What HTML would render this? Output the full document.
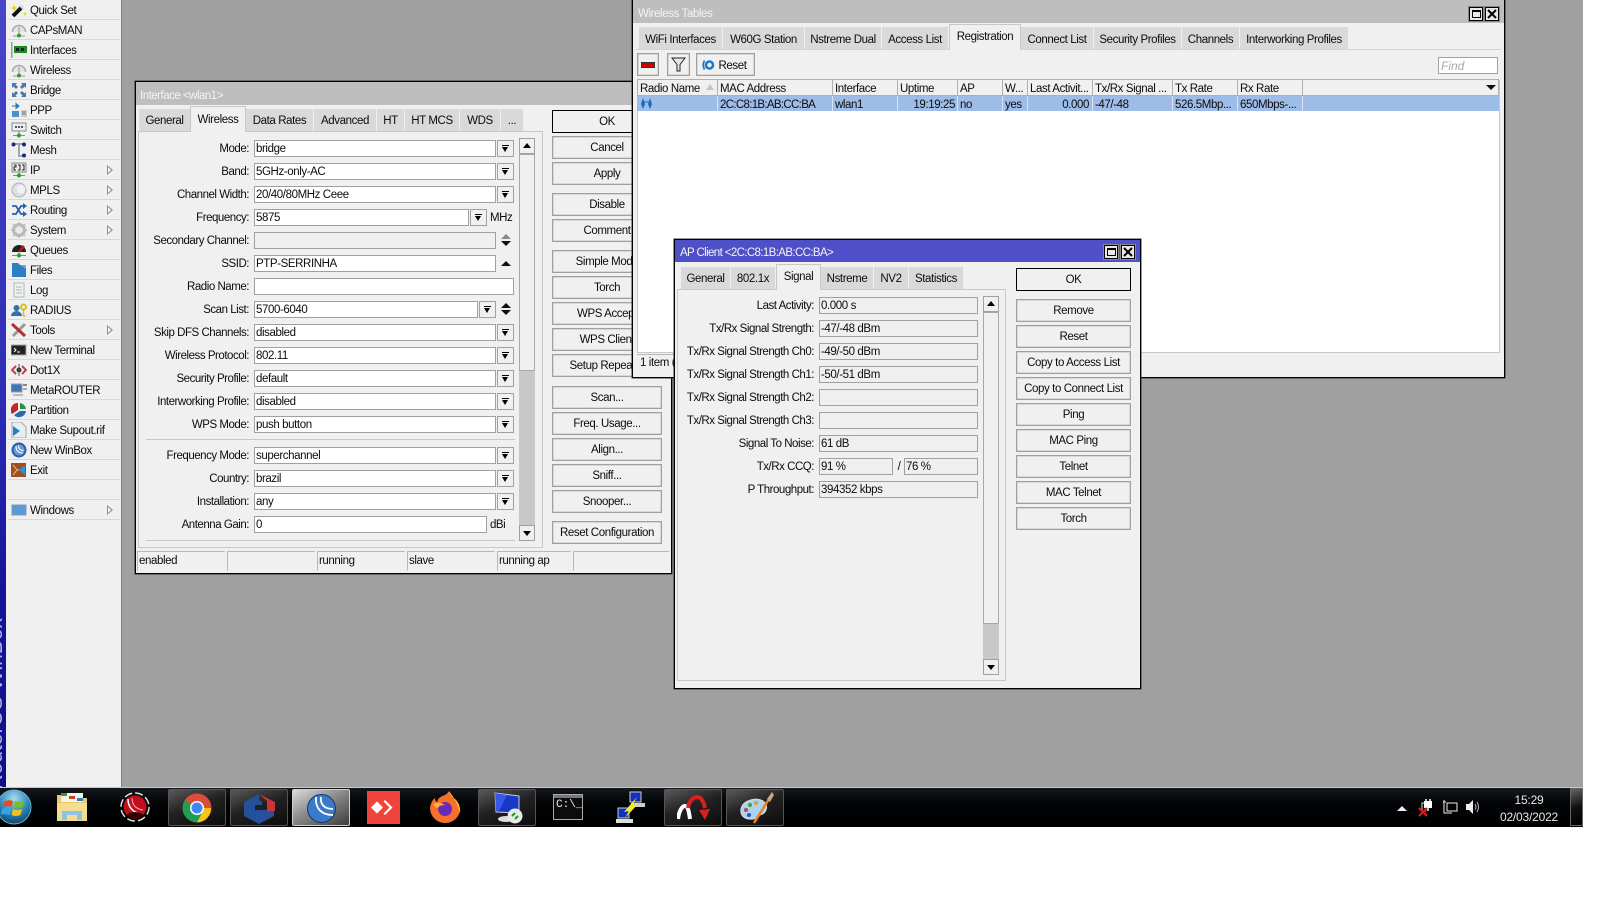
<!DOCTYPE html>
<html><head><meta charset="utf-8"><title>WinBox</title>
<style>
html,body{margin:0;padding:0;background:#fff;width:1600px;height:900px;overflow:hidden}
*{box-sizing:border-box}
#root{position:absolute;left:0;top:0;width:1600px;height:900px;overflow:hidden;font:11.5px/16px "Liberation Sans",sans-serif;letter-spacing:-.4px;color:#0c0c0c}
#root div,#root svg{position:absolute}
.desk{left:0;top:0;width:1583px;height:787px;background:#a0a0a0}
.strip{left:0;top:0;width:6px;height:787px;background:linear-gradient(#4a46c8,#2f2db4 50%,#14149a 75%,#0e0e8c);overflow:hidden}
.strip div{writing-mode:vertical-rl;transform:rotate(180deg);left:-15px;bottom:-3px;font-size:21px;line-height:21px;letter-spacing:0;color:#b4b4d8;white-space:nowrap}
.menu{left:6px;top:0;width:116px;height:787px;background:#f0f0f0;border-right:1px solid #808080}
.m{left:2px;width:112px;height:20px;border-bottom:1px solid #d8d8d8;line-height:22px;padding-left:22px;white-space:nowrap}
.m svg{left:3px;top:2px;width:16px;height:16px}
.m i{position:absolute;left:99px;top:5px;width:6px;height:10px;background:#909090;clip-path:polygon(0 0,100% 50%,0 100%)}
.m i::after{content:"";position:absolute;left:1px;top:2px;width:3px;height:6px;background:#fafafa;clip-path:polygon(0 0,100% 50%,0 100%)}
.win{background:#f0f0f0;border:1px solid #000;box-shadow:0 0 0 .5px #333}
.tb{left:0;top:0;right:0;background:#bebebe;color:#f4f4f4;padding-left:4px}
.tab{background:#d9d9d9;height:22px;text-align:center;line-height:25px;white-space:nowrap;border-right:1px solid #f0f0f0}
.tab.a{background:#f0f0f0;height:26px;line-height:25px;border:1px solid #c8c8c8;border-bottom:0;z-index:2}
.panel{background:#f0f0f0;border:1px solid #c8c8c8}
.b{background:#f0f0f0;border:1px solid #a0a0a0;box-shadow:inset 0 0 0 .5px #c0c0c0;text-align:center;line-height:23px;white-space:nowrap;height:23px}
.b.k{border:1px solid #000;box-shadow:none}
.f{height:17px;background:#fff;border:1px solid #a0a0a0;padding-left:1px;line-height:17px;white-space:nowrap;overflow:hidden}
.f.g{background:#efefef}
.l{text-align:right;white-space:nowrap;line-height:19px;height:17px;letter-spacing:-.47px}
.d{width:17px;height:17px;background:#f0f0f0;border:1px solid #a0a0a0}
.d::before{content:"";position:absolute;left:4px;top:4px;width:7px;height:1px;background:#000}
.d::after{content:"";position:absolute;left:4px;top:6px;border-top:5px solid #000;border-left:3.5px solid transparent;border-right:3.5px solid transparent}
.su,.sd{width:16px;height:16px;background:#f0f0f0;border:1px solid #a0a0a0}
.su::after{content:"";position:absolute;left:3px;top:4px;border-bottom:5px solid #000;border-left:4px solid transparent;border-right:4px solid transparent}
.sd::after{content:"";position:absolute;left:3px;top:5px;border-top:5px solid #000;border-left:4px solid transparent;border-right:4px solid transparent}
.ua{width:0;height:0;border-bottom:5px solid #111;border-left:5px solid transparent;border-right:5px solid transparent}
.da{width:0;height:0;border-top:5px solid #111;border-left:5px solid transparent;border-right:5px solid transparent}
.sb{height:20px;background:#f0f0f0;border:1px solid #b8b8b8;border-right-color:#f0f0f0;border-bottom-color:#f0f0f0;padding-left:1px;line-height:18px}
.th{top:79px;height:17px;background:#f0f0f0;border:1px solid #b0b0b0;border-left:0;padding-left:2px;line-height:18px;white-space:nowrap;overflow:hidden}
.td{top:96px;height:15px;line-height:19px;padding-left:2px;white-space:nowrap;overflow:hidden;border-right:1px solid #d8e4f4}
.wb{width:14px;height:14px;border:1px solid #000;background:#e8e8e8;box-shadow:0 0 0 1px #888}
.task{left:0;top:787px;width:1583px;height:40px;background:linear-gradient(#14181c,#020406 40%,#000);border-top:1px solid #c8c8c8}
.tbtn{top:1px;width:58px;height:37px;border:1px solid #555;border-radius:2px;background:linear-gradient(160deg,#5a5a5a,#222 45%,#0c0c0c)}
.tbtn.on{background:linear-gradient(150deg,#dcdcdc,#8c8c8c 45%,#3c3c3c);border-color:#d0d0d0}
.clock{color:#e8e8e8;text-align:center;font-size:12px;letter-spacing:-.2px;width:90px}
</style></head><body>
<div id="root">
<div class="desk"></div>
<div class="strip"><div>RouterOS WinBox</div></div>
<div class="menu">
<div class="m" style="top:0"><svg viewBox="0 0 16 16"><path d="M2 14L11 5" stroke="#111" stroke-width="4"/><path d="M10 6L12 4" stroke="#ddd" stroke-width="4"/><path d="M3 3l1 2 2 1-2 1-1 2-1-2-2-1 2-1zM14 10l.7 1.3 1.3.7-1.3.7-.7 1.3-.7-1.3-1.3-.7 1.3-.7z" fill="#e6d800"/></svg>Quick Set</div>
<div class="m" style="top:20px"><svg viewBox="0 0 16 16"><path d="M1.5 10a6.5 6.5 0 0 1 13 0" fill="#e4e4e4" stroke="#a8a8a8" stroke-width="1.5"/><path d="M8 5v9" stroke="#999"/><path d="M2 14h12" stroke="#999"/><circle cx="8" cy="13.5" r="2" fill="#2aa02a"/></svg>CAPsMAN</div>
<div class="m" style="top:40px"><svg viewBox="0 0 16 16"><rect x="0" y="0" width="1.5" height="16" fill="#999"/><rect x="3" y="4" width="13" height="7" fill="#1a8a20"/><rect x="5" y="6" width="3" height="3" fill="#123"/><rect x="10" y="6" width="3" height="3" fill="#123"/></svg>Interfaces</div>
<div class="m" style="top:60px"><svg viewBox="0 0 16 16"><path d="M1.5 10a6.5 6.5 0 0 1 13 0" fill="#e4e4e4" stroke="#a8a8a8" stroke-width="1.5"/><path d="M8 5v9" stroke="#999"/><path d="M2 14h12" stroke="#999"/><circle cx="8" cy="13.5" r="2" fill="#2aa02a"/></svg>Wireless</div>
<div class="m" style="top:80px"><svg viewBox="0 0 16 16"><g fill="#4a78a8"><path d="M1 1h5L4.500 2.500 7 5 5 7 2.500 4.500 1 6zM15 1v5l-1.500-1.500L11 7 9 5l2.500-2.500L10 1zM1 15v-5l1.500 1.500L5 9l2 2-2.500 2.500L6 15zM15 15h-5l1.500-1.500L9 11l2-2 2.500 2.500L15 10z"/></g></svg>Bridge</div>
<div class="m" style="top:100px"><svg viewBox="0 0 16 16"><path d="M1 4h6M5 1.500L8 4 5 6.500z" stroke="#2a7ab8" fill="#2a7ab8"/><rect x="1" y="9" width="7" height="6" fill="#4a90d0"/><rect x="10" y="8" width="6" height="7" fill="#ccc"/><path d="M11 10h4M11 12h4" stroke="#777"/></svg>PPP</div>
<div class="m" style="top:120px"><svg viewBox="0 0 16 16"><rect x="1" y="1" width="14" height="8" fill="#eee" stroke="#888"/><path d="M4 5h2M7 5h2M10 5h2" stroke="#222" stroke-width="1.500"/><path d="M8 9v5M2 13.500h12" stroke="#888"/><circle cx="8" cy="13.500" r="2" fill="#2aa02a"/></svg>Switch</div>
<div class="m" style="top:140px"><svg viewBox="0 0 16 16"><path d="M2 2h12M8 2v12h5" stroke="#9aa8b0" stroke-width="2" fill="none"/><circle cx="2.500" cy="2.500" r="2" fill="#1a2a80"/><circle cx="13" cy="2.500" r="2" fill="#1a2a80"/><circle cx="13" cy="13.500" r="2" fill="#1a2a80"/></svg>Mesh</div>
<div class="m" style="top:160px"><svg viewBox="0 0 16 16"><rect x="1" y="1" width="14" height="9" fill="#eee" stroke="#888"/><path d="M3 3h2v2H3v3h2M7 3h2v5H7M11 3h2v5h-2" stroke="#222" fill="none"/><path d="M2 13.500h12M8 10v4" stroke="#888"/><circle cx="8" cy="13.500" r="2" fill="#2aa02a"/></svg>IP<i></i></div>
<div class="m" style="top:180px"><svg viewBox="0 0 16 16"><circle cx="8" cy="8" r="7" fill="#dde0e0" stroke="#a8b0b0"/><circle cx="10" cy="7" r="4.500" fill="#f0f2f2"/></svg>MPLS<i></i></div>
<div class="m" style="top:200px"><svg viewBox="0 0 16 16"><path d="M1 4h4l5 8h4M1 12h4l5-8h4" stroke="#2a62a8" stroke-width="1.800" fill="none"/><path d="M12 1l4 3-4 3zM12 9l4 3-4 3z" fill="#2a62a8"/></svg>Routing<i></i></div>
<div class="m" style="top:220px"><svg viewBox="0 0 16 16"><circle cx="8" cy="8" r="5.500" fill="none" stroke="#b8bcb8" stroke-width="3"/><path d="M8 0v16M0 8h16M2 2l12 12M14 2L2 14" stroke="#b8bcb8" stroke-width="1.500"/><circle cx="8" cy="8" r="3.500" fill="#e8ece8"/></svg>System<i></i></div>
<div class="m" style="top:240px"><svg viewBox="0 0 16 16"><path d="M1 10a7 7 0 0 1 14 0z" fill="#222"/><path d="M7 10L12 3l2 2-5 5z" fill="#c81818"/><path d="M1 13.500h14M8 10v4" stroke="#888"/><circle cx="8" cy="13.500" r="2" fill="#2aa02a"/></svg>Queues</div>
<div class="m" style="top:260px"><svg viewBox="0 0 16 16"><path d="M1 1h6l2 2h6v12H1z" fill="#2f7fc0"/><path d="M9 3h6v4z" fill="#5fb0e8"/></svg>Files</div>
<div class="m" style="top:280px"><svg viewBox="0 0 16 16"><rect x="3" y="1" width="10" height="14" fill="#eef2ee" stroke="#b0b8b0"/><path d="M5 5h6M5 8h6M5 11h6" stroke="#b0b8b0"/></svg>Log</div>
<div class="m" style="top:300px"><svg viewBox="0 0 16 16"><circle cx="5.500" cy="6" r="3" fill="#3070b0"/><path d="M0 14a5.500 5 0 0 1 11 0z" fill="#3070b0"/><circle cx="12.500" cy="5" r="2.500" fill="none" stroke="#d8c020" stroke-width="2"/><path d="M12.500 7v7h2" stroke="#d8c020" stroke-width="1.500" fill="none"/></svg>RADIUS</div>
<div class="m" style="top:320px"><svg viewBox="0 0 16 16"><path d="M2 14L14 2" stroke="#999" stroke-width="3"/><path d="M1 2l13 12" stroke="#b03030" stroke-width="3"/></svg>Tools<i></i></div>
<div class="m" style="top:340px"><svg viewBox="0 0 16 16"><rect x="0" y="3" width="15" height="10" fill="#222" stroke="#aaa"/><path d="M3 6l2 2-2 2M6 10h3" stroke="#fff" fill="none"/></svg>New Terminal</div>
<div class="m" style="top:360px"><svg viewBox="0 0 16 16"><path d="M5 4L1 8l4 4M11 4l4 4-4 4" stroke="#c04050" stroke-width="2" fill="none"/><circle cx="8" cy="8" r="2.500" fill="#333"/><path d="M8 2v12" stroke="#555"/></svg>Dot1X</div>
<div class="m" style="top:380px"><svg viewBox="0 0 16 16"><rect x="0" y="2" width="11" height="8" fill="#3a78b8" stroke="#99a"/><rect x="12" y="2" width="4" height="2" fill="#888"/><rect x="12" y="6" width="4" height="2" fill="#aaa"/><path d="M2 13h10" stroke="#bbb" stroke-width="2"/></svg>MetaROUTER</div>
<div class="m" style="top:400px"><svg viewBox="0 0 16 16"><path d="M7 1v7L1 12A7 7 0 0 1 7 1z" fill="#c02828"/><path d="M9 1a7 7 0 0 1 6 6H9z" fill="#2a9040"/><path d="M3 13l6-4h6a7 7 0 0 1-12 4z" fill="#2a6ab0"/></svg>Partition</div>
<div class="m" style="top:420px"><svg viewBox="0 0 16 16"><path d="M1 0h9l5 5v11H1z" fill="#e8eef0" stroke="#a0a8b0"/><path d="M2 4l7 5-7 5z" fill="#2080c8"/></svg>Make Supout.rif</div>
<div class="m" style="top:440px"><svg viewBox="0 0 16 16"><circle cx="8" cy="8" r="7.500" fill="#2a5ca8"/><circle cx="8" cy="8" r="5.500" fill="#6a9ad8"/><path d="M5 4c0 4 2 7 7 7M7.500 3.500c0 3 1.500 5 5 5" stroke="#fff" fill="none"/></svg>New WinBox</div>
<div class="m" style="top:460px"><svg viewBox="0 0 16 16"><rect x="0" y="1" width="15" height="14" fill="#9c4f20"/><path d="M2 3l4 5-4 5M6 8h8" stroke="#e0c090" fill="none"/><path d="M8 8l6-5v10z" fill="#3090d8"/></svg>Exit</div>
<div class="m" style="top:480px"></div>
<div class="m" style="top:500px"><svg viewBox="0 0 16 16"><rect x="1" y="3" width="14" height="10" fill="#5a9ad8" stroke="#8a9aa8"/></svg>Windows<i></i></div>
</div>

<!-- Interface window -->
<div class="win" style="left:135px;top:81px;width:537px;height:493px">
<div class="tb" style="height:23px;line-height:28px;left:0;top:0;letter-spacing:-.5px">Interface &lt;wlan1&gt;</div>
<div style="left:0;top:0;width:535px;height:491px">
<div class="tab" style="left:3px;top:27px;width:52px">General</div>
<div class="tab a" style="left:54px;top:24px;width:56px;line-height:27px">Wireless</div>
<div class="tab" style="left:110px;top:27px;width:68px">Data Rates</div>
<div class="tab" style="left:178px;top:27px;width:63px">Advanced</div>
<div class="tab" style="left:241px;top:27px;width:28px">HT</div>
<div class="tab" style="left:269px;top:27px;width:55px">HT MCS</div>
<div class="tab" style="left:324px;top:27px;width:41px">WDS</div>
<div class="tab" style="left:365px;top:27px;width:23px">...</div>
<div class="panel" style="left:2px;top:49px;width:405px;height:417px"></div>
<div class="l" style="left:0;top:58px;width:113px">Mode:</div><div class="f" style="left:118px;top:58px;width:242px">bridge</div><div class="d" style="left:361px;top:58px"></div>
<div class="l" style="left:0;top:81px;width:113px">Band:</div><div class="f" style="left:118px;top:81px;width:242px">5GHz-only-AC</div><div class="d" style="left:361px;top:81px"></div>
<div class="l" style="left:0;top:104px;width:113px">Channel Width:</div><div class="f" style="left:118px;top:104px;width:242px">20/40/80MHz Ceee</div><div class="d" style="left:361px;top:104px"></div>
<div class="l" style="left:0;top:127px;width:113px">Frequency:</div><div class="f" style="left:118px;top:127px;width:215px">5875</div><div class="d" style="left:334px;top:127px"></div><div class="l" style="left:354px;top:127px;width:24px;text-align:left">MHz</div>
<div class="l" style="left:0;top:150px;width:113px">Secondary Channel:</div><div class="f g" style="left:118px;top:150px;width:242px"></div><div class="ua" style="left:365px;top:152px;border-bottom-color:#8a8a8a"></div><div class="da" style="left:365px;top:159px"></div>
<div class="l" style="left:0;top:173px;width:113px">SSID:</div><div class="f" style="left:118px;top:173px;width:242px">PTP-SERRINHA</div><div class="ua" style="left:365px;top:179px"></div>
<div class="l" style="left:0;top:196px;width:113px">Radio Name:</div><div class="f" style="left:118px;top:196px;width:260px"></div>
<div class="l" style="left:0;top:219px;width:113px">Scan List:</div><div class="f" style="left:118px;top:219px;width:224px">5700-6040</div><div class="d" style="left:343px;top:219px"></div><div class="ua" style="left:365px;top:221px"></div><div class="da" style="left:365px;top:228px"></div>
<div class="l" style="left:0;top:242px;width:113px">Skip DFS Channels:</div><div class="f" style="left:118px;top:242px;width:242px">disabled</div><div class="d" style="left:361px;top:242px"></div>
<div class="l" style="left:0;top:265px;width:113px">Wireless Protocol:</div><div class="f" style="left:118px;top:265px;width:242px">802.11</div><div class="d" style="left:361px;top:265px"></div>
<div class="l" style="left:0;top:288px;width:113px">Security Profile:</div><div class="f" style="left:118px;top:288px;width:242px">default</div><div class="d" style="left:361px;top:288px"></div>
<div class="l" style="left:0;top:311px;width:113px">Interworking Profile:</div><div class="f" style="left:118px;top:311px;width:242px">disabled</div><div class="d" style="left:361px;top:311px"></div>
<div class="l" style="left:0;top:334px;width:113px">WPS Mode:</div><div class="f" style="left:118px;top:334px;width:242px">push button</div><div class="d" style="left:361px;top:334px"></div>
<div style="left:10px;top:357px;width:369px;height:1px;background:#c8c8c8"></div>
<div class="l" style="left:0;top:365px;width:113px">Frequency Mode:</div><div class="f" style="left:118px;top:365px;width:242px">superchannel</div><div class="d" style="left:361px;top:365px"></div>
<div class="l" style="left:0;top:388px;width:113px">Country:</div><div class="f" style="left:118px;top:388px;width:242px">brazil</div><div class="d" style="left:361px;top:388px"></div>
<div class="l" style="left:0;top:411px;width:113px">Installation:</div><div class="f" style="left:118px;top:411px;width:242px">any</div><div class="d" style="left:361px;top:411px"></div>
<div class="l" style="left:0;top:434px;width:113px">Antenna Gain:</div><div class="f" style="left:118px;top:434px;width:233px">0</div><div class="l" style="left:354px;top:434px;width:24px;text-align:left">dBi</div>
<div style="left:10px;top:458px;width:369px;height:1px;background:#c8c8c8"></div>
<div style="left:383px;top:56px;width:16px;height:388px;background:#c8c8c8"></div>
<div style="left:383px;top:72px;width:16px;height:217px;background:#f0f0f0;border:1px solid #a8a8a8"></div>
<div class="su" style="left:383px;top:56px"></div>
<div class="sd" style="left:383px;top:443px"></div>
<div class="b k" style="left:416px;top:28px;width:110px">OK</div>
<div class="b" style="left:416px;top:54px;width:110px">Cancel</div>
<div class="b" style="left:416px;top:80px;width:110px">Apply</div>
<div class="b" style="left:416px;top:111px;width:110px">Disable</div>
<div class="b" style="left:416px;top:137px;width:110px">Comment</div>
<div class="b" style="left:416px;top:168px;width:110px">Simple Mode</div>
<div class="b" style="left:416px;top:194px;width:110px">Torch</div>
<div class="b" style="left:416px;top:220px;width:110px">WPS Accept</div>
<div class="b" style="left:416px;top:246px;width:110px">WPS Client</div>
<div class="b" style="left:416px;top:272px;width:110px">Setup Repeater</div>
<div class="b" style="left:416px;top:304px;width:110px">Scan...</div>
<div class="b" style="left:416px;top:330px;width:110px">Freq. Usage...</div>
<div class="b" style="left:416px;top:356px;width:110px">Align...</div>
<div class="b" style="left:416px;top:382px;width:110px">Sniff...</div>
<div class="b" style="left:416px;top:408px;width:110px">Snooper...</div>
<div class="b" style="left:416px;top:439px;width:110px">Reset Configuration</div>
<div class="sb" style="left:1px;top:469px;width:88px">enabled</div>
<div class="sb" style="left:91px;top:469px;width:88px"></div>
<div class="sb" style="left:181px;top:469px;width:88px">running</div>
<div class="sb" style="left:271px;top:469px;width:88px">slave</div>
<div class="sb" style="left:361px;top:469px;width:74px">running ap</div>
<div class="sb" style="left:437px;top:469px;width:97px"></div>
</div></div>

<!-- Wireless Tables window -->
<div class="win" style="left:632px;top:-1px;width:873px;height:379px;background:#f0f0f0">
<div class="tb" style="height:23px;line-height:28px;padding-left:5px">Wireless Tables</div>
<div class="wb" style="left:836px;top:7px"></div><div style="left:839px;top:10px;width:9px;height:8px;border:1px solid #000;border-top-width:2px"></div>
<div class="wb" style="left:852px;top:7px"></div><svg style="left:854px;top:9px" width="10" height="10" viewBox="0 0 10 10"><path d="M1 1l8 8M9 1l-8 8" stroke="#000" stroke-width="2"/></svg>
<div class="tab" style="left:6px;top:27px;width:84px;line-height:26px">WiFi Interfaces</div>
<div class="tab" style="left:90px;top:27px;width:82px;line-height:26px">W60G Station</div>
<div class="tab" style="left:172px;top:27px;width:77px;line-height:26px">Nstreme Dual</div>
<div class="tab" style="left:249px;top:27px;width:67px;line-height:26px">Access List</div>
<div class="tab a" style="left:316px;top:24px;width:72px;height:26px">Registration</div>
<div class="tab" style="left:388px;top:27px;width:73px;line-height:26px">Connect List</div>
<div class="tab" style="left:461px;top:27px;width:88px;line-height:26px">Security Profiles</div>
<div class="tab" style="left:549px;top:27px;width:58px;line-height:26px">Channels</div>
<div class="tab" style="left:607px;top:27px;width:109px;line-height:26px">Interworking Profiles</div>
<div style="left:3px;top:49px;width:865px;height:1px;background:#d4d4d4"></div>
<div class="b" style="left:4px;top:53px;width:22px;height:23px"><div style="left:4px;top:9px;width:12px;height:4px;background:#d00000;outline:1px solid #333"></div></div>
<div class="b" style="left:34px;top:53px;width:23px;height:23px"><svg style="left:3px;top:3px" width="15" height="15" viewBox="0 0 15 15"><path d="M1 1h13L9 7.500V14H6V7.500z" fill="#e8e8e8" stroke="#222"/></svg></div>
<div class="b" style="left:63px;top:53px;width:59px;height:23px;padding-left:14px;line-height:25px"><svg style="left:4px;top:4px" width="14" height="14" viewBox="0 0 14 14"><circle cx="8.500" cy="7" r="3.500" fill="none" stroke="#1a78c8" stroke-width="2.500"/><path d="M3.500 2.500Q1 7 3.500 11.500" stroke="#1a78c8" stroke-width="1.800" fill="none"/></svg>Reset</div>
<div class="f" style="left:805px;top:57px;width:60px;color:#a8a8a8;font-style:italic;font-size:12px;letter-spacing:0;padding-left:2px">Find</div>
<div style="left:4px;top:80px;width:863px;height:273px;background:#fff;border:1px solid #c8c8c8"></div>
</div>
<div style="left:0;top:0;width:0;height:0">
<div class="th" style="left:637px;width:81px;border-left:1px solid #b0b0b0">Radio Name</div>
<div class="th" style="left:718px;width:115px">MAC Address</div>
<div class="th" style="left:833px;width:65px">Interface</div>
<div class="th" style="left:898px;width:60px">Uptime</div>
<div class="th" style="left:958px;width:45px">AP</div>
<div class="th" style="left:1003px;width:25px">W...</div>
<div class="th" style="left:1028px;width:65px">Last Activit...</div>
<div class="th" style="left:1093px;width:80px">Tx/Rx Signal ...</div>
<div class="th" style="left:1173px;width:65px">Tx Rate</div>
<div class="th" style="left:1238px;width:65px">Rx Rate</div>
<div class="th" style="left:1303px;width:196px"></div>
<div class="da" style="left:1486px;top:85px;z-index:1"></div>
<div style="left:706px;top:84px;width:0;height:0;border-bottom:6px solid #c4c4c4;border-left:4px solid transparent;border-right:4px solid transparent"></div>
<div style="left:637px;top:96px;width:862px;height:15px;background:#9dbde8"></div>
<div class="td" style="left:637px;width:81px"><svg style="left:3px;top:1px" width="13" height="13" viewBox="0 0 13 13"><path d="M3 1L1 7l2 5 2-5zM10 1L8 7l2 5 2-5z" fill="#1a6ac0"/><path d="M3 5h7" stroke="#1a6ac0"/></svg></div>
<div class="td" style="left:718px;width:115px;letter-spacing:-.68px">2C:C8:1B:AB:CC:BA</div>
<div class="td" style="left:833px;width:65px">wlan1</div>
<div class="td" style="left:898px;width:60px;text-align:right;padding-right:2px">19:19:25</div>
<div class="td" style="left:958px;width:45px">no</div>
<div class="td" style="left:1003px;width:25px">yes</div>
<div class="td" style="left:1028px;width:65px;text-align:right;padding-right:3px">0.000</div>
<div class="td" style="left:1093px;width:80px">-47/-48</div>
<div class="td" style="left:1173px;width:65px">526.5Mbp...</div>
<div class="td" style="left:1238px;width:65px">650Mbps-...</div>
<div style="left:637px;top:354px;width:60px;height:22px;border-top:1px solid #b8b8b8;border-right:1px solid #b8b8b8;padding-left:3px;line-height:17px;white-space:nowrap">1 item (1</div>
</div>

<!-- AP Client window -->
<div class="win" style="left:674px;top:239px;width:467px;height:450px">
<div class="tb" style="height:22px;line-height:27px;background:#4f50c8;padding-left:5px;letter-spacing:-.62px">AP Client &lt;2C:C8:1B:AB:CC:BA&gt;</div>
<div class="wb" style="left:429px;top:5px"></div><div style="left:432px;top:8px;width:9px;height:8px;border:1px solid #000;border-top-width:2px"></div>
<div class="wb" style="left:446px;top:5px"></div><svg style="left:448px;top:7px" width="10" height="10" viewBox="0 0 10 10"><path d="M1 1l8 8M9 1l-8 8" stroke="#000" stroke-width="2"/></svg>
<div class="tab" style="left:6px;top:27px;width:50px">General</div>
<div class="tab" style="left:56px;top:27px;width:45px">802.1x</div>
<div class="tab a" style="left:101px;top:24px;width:45px">Signal</div>
<div class="tab" style="left:146px;top:27px;width:53px">Nstreme</div>
<div class="tab" style="left:199px;top:27px;width:35px">NV2</div>
<div class="tab" style="left:234px;top:27px;width:55px">Statistics</div>
<div class="panel" style="left:2px;top:49px;width:329px;height:392px"></div>
<div class="l" style="left:0;top:57px;width:139px">Last Activity:</div><div class="f g" style="left:144px;top:57px;width:159px">0.000 s</div>
<div class="l" style="left:0;top:80px;width:139px">Tx/Rx Signal Strength:</div><div class="f g" style="left:144px;top:80px;width:159px">-47/-48 dBm</div>
<div class="l" style="left:0;top:103px;width:139px">Tx/Rx Signal Strength Ch0:</div><div class="f g" style="left:144px;top:103px;width:159px">-49/-50 dBm</div>
<div class="l" style="left:0;top:126px;width:139px">Tx/Rx Signal Strength Ch1:</div><div class="f g" style="left:144px;top:126px;width:159px">-50/-51 dBm</div>
<div class="l" style="left:0;top:149px;width:139px">Tx/Rx Signal Strength Ch2:</div><div class="f g" style="left:144px;top:149px;width:159px"></div>
<div class="l" style="left:0;top:172px;width:139px">Tx/Rx Signal Strength Ch3:</div><div class="f g" style="left:144px;top:172px;width:159px"></div>
<div class="l" style="left:0;top:195px;width:139px">Signal To Noise:</div><div class="f g" style="left:144px;top:195px;width:159px">61 dB</div>
<div class="l" style="left:0;top:218px;width:139px">Tx/Rx CCQ:</div><div class="f g" style="left:144px;top:218px;width:74px">91 %</div><div class="l" style="left:220px;top:218px;width:8px;text-align:center">/</div><div class="f g" style="left:229px;top:218px;width:74px">76 %</div>
<div class="l" style="left:0;top:241px;width:139px">P Throughput:</div><div class="f g" style="left:144px;top:241px;width:159px">394352 kbps</div>
<div style="left:308px;top:56px;width:16px;height:378px;background:#c8c8c8"></div>
<div style="left:308px;top:72px;width:16px;height:312px;background:#f0f0f0;border:1px solid #a8a8a8"></div>
<div class="su" style="left:308px;top:56px"></div>
<div class="sd" style="left:308px;top:419px"></div>
<div class="b k" style="left:341px;top:28px;width:115px">OK</div>
<div class="b" style="left:341px;top:59px;width:115px">Remove</div>
<div class="b" style="left:341px;top:85px;width:115px">Reset</div>
<div class="b" style="left:341px;top:111px;width:115px">Copy to Access List</div>
<div class="b" style="left:341px;top:137px;width:115px">Copy to Connect List</div>
<div class="b" style="left:341px;top:163px;width:115px">Ping</div>
<div class="b" style="left:341px;top:189px;width:115px">MAC Ping</div>
<div class="b" style="left:341px;top:215px;width:115px">Telnet</div>
<div class="b" style="left:341px;top:241px;width:115px">MAC Telnet</div>
<div class="b" style="left:341px;top:267px;width:115px">Torch</div>
</div>

<!-- Taskbar -->
<div class="task">
<svg style="left:-3px;top:1px" width="36" height="37" viewBox="0 0 36 37"><defs><radialGradient id="o" cx=".5" cy=".25" r=".8"><stop offset="0" stop-color="#a8dcf0"/><stop offset=".55" stop-color="#2a86b8"/><stop offset="1" stop-color="#0c3c60"/></radialGradient></defs><circle cx="17" cy="18" r="17" fill="url(#o)" stroke="#6ab0d0"/><path d="M7 13q4-3 9-1l-1.500 6q-5-2-9 0z" fill="#e84a20"/><path d="M18 12q4 2 9 0l-1.500 6q-5 2-9 0z" fill="#78c020"/><path d="M5 20q4-2 9 0l-1.500 6q-5-2-9 0z" fill="#30a8e8"/><path d="M16 20q4 2 9 0l-1.500 6q-5 2-9 0z" fill="#f0c020"/></svg>
<svg style="left:56px;top:3px" width="33" height="33" viewBox="0 0 33 33"><path d="M1 4h14l3 3h13v23H1z" fill="#e8c868"/><rect x="5" y="2" width="22" height="9" fill="#f4f4e8"/><rect x="5" y="2" width="6" height="3" fill="#2aa040"/><rect x="13" y="5" width="6" height="3" fill="#c84030"/><rect x="21" y="7" width="6" height="3" fill="#3080d0"/><path d="M1 12h30v18H1z" fill="#f4dc90"/><path d="M6 20h20v9h-5v-5H11v5H6z" fill="#8cc4e8"/></svg>
<svg style="left:120px;top:3px" width="30" height="32" viewBox="0 0 30 32"><circle cx="15" cy="16" r="14" fill="none" stroke="#ddd" stroke-width="1.500" stroke-dasharray="8 3"/><circle cx="15" cy="16" r="11.500" fill="#c01020"/><path d="M8 8c0 8 5 14 14 15" stroke="#fff" stroke-width="1.500" fill="none"/><path d="M12 7c0 7 4 11 11 12" stroke="#ffb0b0" fill="none"/><ellipse cx="15" cy="24" rx="8" ry="3" fill="#300"/></svg>
<div class="tbtn" style="left:168px"><svg style="left:13px;top:3px" width="30" height="30" viewBox="0 0 30 30"><circle cx="15" cy="15" r="14.500" fill="#dd4b39"/><path d="M15 15L2.500 22A14.500 14.500 0 0 1 3 7z" fill="#1e9e50"/><path d="M15 15h14a14.500 14.500 0 0 1-14 14.500L8 22z" fill="#f7c518"/><path d="M15 15L2.500 22A14.500 14.500 0 0 0 15 29.500L21 18z" fill="#1e9e50"/><circle cx="15" cy="15" r="7" fill="#fff"/><circle cx="15" cy="15" r="5.500" fill="#4285f4"/></svg></div>
<div class="tbtn" style="left:230px"><svg style="left:12px;top:3px" width="33" height="31" viewBox="0 0 33 31"><path d="M16 1l-15 8v14l15 8 15-8v-6H12v-5h7V9l-3-2z" fill="#25509c"/><path d="M16 1l16 8v9h-8V8z" fill="#c8353a"/><path d="M12 17h12v4H12z" fill="#25509c"/></svg></div>
<div class="tbtn on" style="left:292px"><svg style="left:14px;top:4px" width="29" height="29" viewBox="0 0 29 29"><circle cx="14.500" cy="14.500" r="14" fill="#3a7ac8" stroke="#17366e"/><path d="M9 3c-1 11 5 18 17 18M14 3c-1 7 3 12 12 12" stroke="#fff" stroke-width="1.800" fill="none"/></svg></div>
<svg style="left:367px;top:3px" width="33" height="33" viewBox="0 0 33 33"><rect width="33" height="33" fill="#ef443b"/><path d="M10 10.500l6 6-6 6-6-6z" fill="#fff"/><path d="M18 9l7.500 7.500L18 24l-1.500-1.500 6-6-6-6z" fill="#fff"/></svg>
<svg style="left:429px;top:3px" width="32" height="33" viewBox="0 0 32 33"><path d="M16 32A15 15 0 0 1 1 17Q2 10 6 7q0 3 2 4 1-5 8-7 3-2 4-4 1 4 5 7 6 5 6 13a15 15 0 0 1-15 12z" fill="#f5702a"/><path d="M20 0q1 5 6 8 6 6 5 14-3-12-11-22z" fill="#ffbd30"/><circle cx="16" cy="18" r="7" fill="#6a2ab8"/><path d="M4 13q6-3 12 1-6 0-7 3-3 0-5-4z" fill="#ffb030"/></svg>
<div class="tbtn" style="left:478px"><svg style="left:13px;top:2px" width="34" height="32" viewBox="0 0 34 32"><path d="M3 1l24 3v17L4 20z" fill="#1838c8" stroke="#ccd"/><path d="M3 1l12 2-8 16H4z" fill="#3858e8"/><ellipse cx="14" cy="27" rx="8" ry="3" fill="#ddd"/><circle cx="23" cy="24" r="7.500" fill="#e8e8e8"/><path d="M20 24l3-3M26 24l-3 3" stroke="#1a9a30" stroke-width="2"/></svg></div>
<svg style="left:553px;top:6px" width="30" height="26" viewBox="0 0 30 26"><rect x=".5" y=".5" width="29" height="25" fill="#0c0c0c" stroke="#aaa"/><rect x="1" y="1" width="28" height="3" fill="#777"/></svg>
<div style="left:556px;top:12px;color:#eee;font:11px/11px 'Liberation Mono',monospace;letter-spacing:0">C:\_</div>
<svg style="left:615px;top:3px" width="32" height="33" viewBox="0 0 32 33"><rect x="15" y="1" width="11" height="10" fill="#1030c0" stroke="#ccc"/><rect x="16" y="12" width="14" height="4" fill="#ccc"/><rect x="3" y="17" width="11" height="10" fill="#1030c0" stroke="#ccc"/><rect x="1" y="28" width="17" height="4" fill="#ddd"/><path d="M22 6L9 21l5-1-4 7 13-14-6 2z" fill="#f4f020"/></svg>
<div class="tbtn" style="left:664px"><svg style="left:12px;top:5px" width="34" height="26" viewBox="0 0 34 26"><path d="M1 24c1-8 4-13 7-13s4 6 5 13" stroke="#fff" stroke-width="4" fill="none"/><path d="M11 13c1-7 5-11 9-11 5 0 7 6 8 11" stroke="#d82020" stroke-width="4" fill="none"/><path d="M22 15l11-1-5 11z" fill="#d82020"/></svg></div>
<div class="tbtn" style="left:726px"><svg style="left:12px;top:1px" width="36" height="34" viewBox="0 0 36 34"><path d="M2 18c2-9 15-12 22-8 6 4 4 12-3 14-3 1-4 4-7 4C6 29 1 25 2 18z" fill="#a8d4f0" stroke="#ddd"/><circle cx="11" cy="14" r="2" fill="#40a040"/><circle cx="17" cy="12" r="2" fill="#e0a020"/><circle cx="7" cy="19" r="2" fill="#d04040"/><circle cx="10" cy="24" r="2" fill="#3050c0"/><path d="M15 32L30 8" stroke="#e88020" stroke-width="2.500"/><path d="M28 8l5-7 2 3-4 7z" fill="#c8a880"/></svg></div>
<div class="ua" style="left:1397px;top:18px;border-bottom-color:#eee"></div>
<svg style="left:1418px;top:11px" width="16" height="19" viewBox="0 0 16 19"><path d="M8 4H4v8h4" fill="none" stroke="#ddd"/><rect x="6" y="2" width="8" height="7" fill="#fff"/><path d="M8 0v3M12 0v3M10 9v3" stroke="#fff" stroke-width="1.500"/><path d="M1 9l8 8M9 9l-8 8" stroke="#e01818" stroke-width="2.200"/></svg>
<svg style="left:1442px;top:11px" width="16" height="17" viewBox="0 0 16 17"><rect x="5" y="4" width="10" height="8" fill="none" stroke="#eee"/><path d="M2 1v13h8M1 3h3" stroke="#eee" fill="none"/></svg>
<svg style="left:1466px;top:11px" width="15" height="17" viewBox="0 0 15 17"><path d="M0 5h3l4-4v14l-4-4H0z" fill="#eee"/><path d="M9 5q2 3 0 6M11 3q3 5 0 10" stroke="#bbb" fill="none"/></svg>
<div class="clock" style="left:1484px;top:4px">15:29</div>
<div class="clock" style="left:1484px;top:21px">02/03/2022</div>
<div style="left:1570px;top:0;width:13px;height:38px;border:1px solid #666;background:linear-gradient(160deg,#666,#111 50%,#000)"></div>
</div>
</div>
</body></html>
